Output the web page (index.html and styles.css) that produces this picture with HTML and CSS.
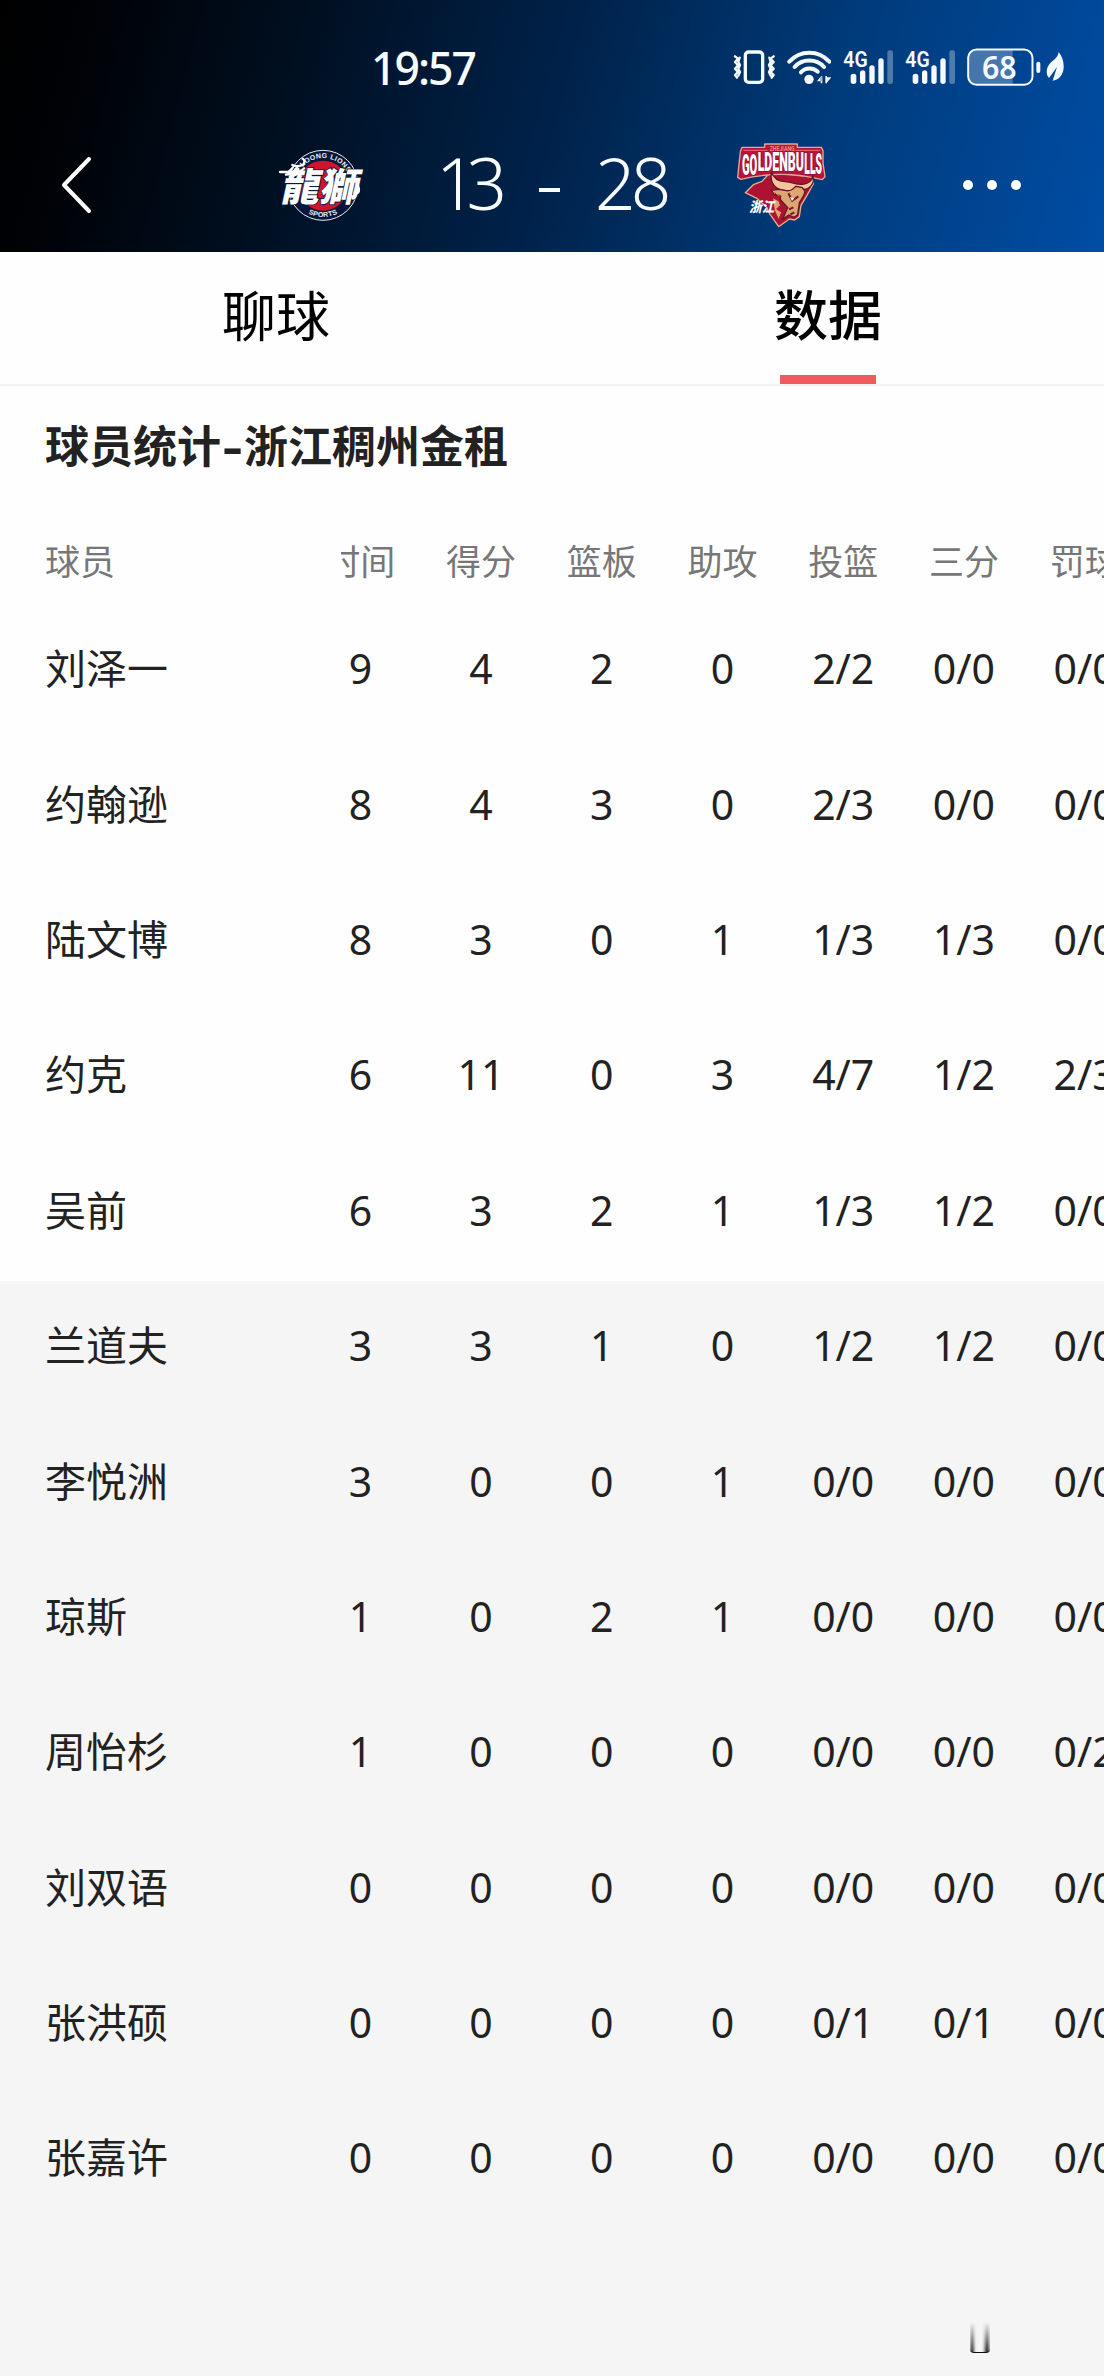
FILE: index.html
```html
<!DOCTYPE html>
<html lang="zh-CN">
<head>
  <meta charset="UTF-8">
  <title>球员统计</title>
  <link rel="stylesheet" href="styles.css">
</head>
<body>
  <header class="header">
    <!-- 状态栏 -->
    <div class="status-bar">
      <div class="clock">19:57</div>
      <div class="status-icons">
        <svg width="42.67" height="38.33" viewBox="38 55 128 115" fill="none" stroke="#f4faff" stroke-linecap="round" stroke-linejoin="round">
          <rect x="75" y="67" width="52" height="91" rx="10" stroke-width="10"/>
          <path d="M44 80l9 7-9 10 9 10-9 10 9 10-9 9 6 8M58 84l-4 12 5 10-5 11 5 10-5 11M160 80l-9 7 9 10-9 10 9 10-9 10 9 9-6 8M147 84l4 12-5 10 5 11-5 10 5 11" stroke-width="7"/>
        </svg>
        <svg width="44.67" height="38.33" viewBox="200 55 134 115" fill="none" stroke="#f4faff" stroke-width="12" stroke-linecap="round">
          <path d="M207 96C239 60 295 60 327 96M223 112C245 86 289 86 311 112M242 128C254 113 280 113 292 126"/>
          <circle cx="266" cy="149" r="14" fill="#f4faff" stroke="none"/>
          <path d="M301 139v22h5v-22zM290 155l13-17v17zM315 139v22h5v-22zM318 161l15-18h-15z" fill="#f4faff" stroke="none"/>
        </svg>
        <svg class="signal" width="50.67" height="38.33" viewBox="368 55 152 115">
          <text x="369" y="111" textLength="73" lengthAdjust="spacingAndGlyphs">4G</text>
          <g fill="#f4faff">
            <rect x="391" y="132" width="17" height="31" rx="8"/>
            <rect x="419" y="122" width="16" height="41" rx="8"/>
            <rect x="447" y="107" width="16" height="56" rx="8"/>
            <rect x="474" y="86" width="16" height="77" rx="8"/>
            <rect x="501" y="62" width="17" height="101" rx="7" opacity=".32"/>
          </g>
        </svg>
        <svg class="signal" width="50.67" height="38.33" viewBox="368 55 152 115">
          <text x="369" y="111" textLength="73" lengthAdjust="spacingAndGlyphs">4G</text>
          <g fill="#f4faff">
            <rect x="391" y="132" width="17" height="31" rx="8"/>
            <rect x="419" y="122" width="16" height="41" rx="8"/>
            <rect x="447" y="107" width="16" height="56" rx="8"/>
            <rect x="474" y="86" width="16" height="77" rx="8"/>
            <rect x="501" y="62" width="17" height="101" rx="7" opacity=".32"/>
          </g>
        </svg>
        <svg class="battery" width="74" height="38.33" viewBox="740 55 222 115">
          <path d="M768 60H877V165H768Q744 165 744 140V85Q744 60 768 60Z" fill="#fff" opacity=".27"/>
          <rect x="743.5" y="59.500" width="193" height="106" rx="25" fill="none" stroke="#f4faff" stroke-width="6"/>
          <rect x="948" y="96" width="12" height="34" rx="6" fill="#f4faff"/>
          <text x="785" y="148" textLength="104" lengthAdjust="spacingAndGlyphs">68</text>
        </svg>
        <svg class="leaf" width="18" height="38.33" viewBox="978 55 54 115">
          <path d="M1016 67C1027 81 1032 97 1031 115C1029 137 1015 152 998 153L1011 112L987 145C976 134 978 112 993 98C1003 89 1014 83 1016 67Z" fill="#f4faff"/>
        </svg>
      </div>
    </div>

    <!-- 比分 -->
    <div class="match-bar">
      <svg class="back" width="32" height="62" viewBox="0 0 32 62" fill="none" stroke="#fff" stroke-width="4" stroke-linecap="round" stroke-linejoin="round">
        <path d="M29 5L4 31L29 57"/>
      </svg>
      <svg class="logo lions" width="130" height="110" viewBox="0 0 390 330">
        <circle cx="189" cy="166" r="105" fill="#07163a" stroke="#e8eef5" stroke-width="3"/>
        <circle cx="189" cy="167" r="75" fill="#cf1430"/>
        <path id="arcTop" d="M107 166A82 82 0 0 1 271 166" fill="none"/>
        <path id="arcBottom" d="M94 166A95 95 0 0 0 284 166" fill="none"/>
        <text class="ring-text" text-anchor="middle"><textPath href="#arcTop" startOffset="54%">LOONG LIONS</textPath></text>
        <text class="ring-text" text-anchor="middle"><textPath href="#arcBottom" startOffset="50%">SPORTS</textPath></text>
        <g transform="translate(60 213) skewX(-12)">
          <text class="lions-name" x="0" y="0" textLength="232" lengthAdjust="spacingAndGlyphs">龍獅</text>
        </g>
        <path d="M60 126H86L98 113M78 134C96 134 104 122 113 109M97 105Q110 112 128 105Q139 94 128 86M90 141C108 137 120 124 132 115" fill="none" stroke="#fff" stroke-width="7" stroke-linecap="round"/>
        <path d="M297 165Q307 190 287 196Q274 188 287 178Z" fill="#fff"/>
      </svg>
      <div class="score"><span class="home">13</span><i class="dash"></i><span>28</span></div>
      <svg class="logo bulls" width="130" height="110" viewBox="0 0 390 330">
        <path d="M76 188L100 164L126 154L150 128L252 138L276 134L280 162L261 196L243 226L238 260L224 270L208 267L176 290L148 250L140 232L112 206Z" fill="#ae1233" stroke="#dfb190" stroke-width="4" stroke-linejoin="round"/>
        <path d="M66 52H134V42H232V52H304L309 62V100L315 140L306 149Q185 118 63 148L53 142L61 65Z" fill="#b81437" stroke="#e2a69a" stroke-width="4" stroke-linejoin="round"/>
        <path d="M70 61H142M226 61H300" stroke="#ef6a72" stroke-width="3"/>
        <text class="bulls-top" x="149" y="62" textLength="75" lengthAdjust="spacingAndGlyphs">ZHEJIANG</text>
        <g class="bulls-name">
          <text x="66" y="134" textLength="46" lengthAdjust="spacingAndGlyphs" font-size="90">GO</text>
          <text x="113" y="123" textLength="139" lengthAdjust="spacingAndGlyphs" font-size="76">LDENBU</text>
          <text x="253" y="132" textLength="53" lengthAdjust="spacingAndGlyphs" font-size="88">LLS</text>
        </g>
        <!-- 牛头 -->
        <path d="M154 126C149 161 165 178 196 182C222 181 240 191 251 178C270 178 286 157 278 138C275 157 262 162 247 163C224 164 219 156 195 155C174 154 160 143 154 126Z" fill="#f4c59a" stroke="#681529" stroke-width="4"/>
        <path d="M154 181L177 178L199 182Q214 184 227 169L247 173L255 184L251 197L238 218L233 254L222 262L206 255L188 268L203 233L182 210L180 197L162 193Z" fill="#dba66f" stroke="#681529" stroke-width="4"/>
        <path d="M205 190L214 207L225 208M214 214L235 199M207 238L220 232M211 253L223 247" fill="none" stroke="#76152c" stroke-width="6"/>
        <path d="M210 201L223 205L216 213Z" fill="#fff"/>
        <path d="M164 188L173 197L185 200M160 204L177 213L181 226L170 237L185 247L176 269L163 241L160 222" fill="#dba66f" stroke="#b81437" stroke-width="3"/>
        <text class="bulls-city" x="88" y="247" textLength="74" lengthAdjust="spacingAndGlyphs">浙江</text>
      </svg>
      <div class="more"><i></i><i></i><i></i></div>
    </div>
  </header>

  <nav class="tabs">
    <div class="tab">聊球</div>
    <div class="tab active">数据</div>
  </nav>

  <main class="stats">
    <h2 class="stats-title">球员统计<span class="hyphen">-</span>浙江稠州金租</h2>

    <div class="row head">
      <div class="name">球员</div>
      <div class="scroll"><div class="cells"><span>时间</span><span>得分</span><span>篮板</span><span>助攻</span><span>投篮</span><span>三分</span><span>罚球</span></div></div>
    </div>

    <!-- 首发 -->
    <div class="row">
      <div class="name">刘泽一</div>
      <div class="scroll"><div class="cells"><span>9</span><span>4</span><span>2</span><span>0</span><span>2/2</span><span>0/0</span><span>0/0</span></div></div>
    </div>
    <div class="row">
      <div class="name">约翰逊</div>
      <div class="scroll"><div class="cells"><span>8</span><span>4</span><span>3</span><span>0</span><span>2/3</span><span>0/0</span><span>0/0</span></div></div>
    </div>
    <div class="row">
      <div class="name">陆文博</div>
      <div class="scroll"><div class="cells"><span>8</span><span>3</span><span>0</span><span>1</span><span>1/3</span><span>1/3</span><span>0/0</span></div></div>
    </div>
    <div class="row">
      <div class="name">约克</div>
      <div class="scroll"><div class="cells"><span>6</span><span>11</span><span>0</span><span>3</span><span>4/7</span><span>1/2</span><span>2/3</span></div></div>
    </div>
    <div class="row">
      <div class="name">吴前</div>
      <div class="scroll"><div class="cells"><span>6</span><span>3</span><span>2</span><span>1</span><span>1/3</span><span>1/2</span><span>0/0</span></div></div>
    </div>

    <!-- 替补 -->
    <div class="bench">
      <div class="row">
        <div class="name">兰道夫</div>
        <div class="scroll"><div class="cells"><span>3</span><span>3</span><span>1</span><span>0</span><span>1/2</span><span>1/2</span><span>0/0</span></div></div>
      </div>
      <div class="row">
        <div class="name">李悦洲</div>
        <div class="scroll"><div class="cells"><span>3</span><span>0</span><span>0</span><span>1</span><span>0/0</span><span>0/0</span><span>0/0</span></div></div>
      </div>
      <div class="row">
        <div class="name">琼斯</div>
        <div class="scroll"><div class="cells"><span>1</span><span>0</span><span>2</span><span>1</span><span>0/0</span><span>0/0</span><span>0/0</span></div></div>
      </div>
      <div class="row">
        <div class="name">周怡杉</div>
        <div class="scroll"><div class="cells"><span>1</span><span>0</span><span>0</span><span>0</span><span>0/0</span><span>0/0</span><span>0/2</span></div></div>
      </div>
      <div class="row">
        <div class="name">刘双语</div>
        <div class="scroll"><div class="cells"><span>0</span><span>0</span><span>0</span><span>0</span><span>0/0</span><span>0/0</span><span>0/0</span></div></div>
      </div>
      <div class="row">
        <div class="name">张洪硕</div>
        <div class="scroll"><div class="cells"><span>0</span><span>0</span><span>0</span><span>0</span><span>0/1</span><span>0/1</span><span>0/0</span></div></div>
      </div>
      <div class="row">
        <div class="name">张嘉许</div>
        <div class="scroll"><div class="cells"><span>0</span><span>0</span><span>0</span><span>0</span><span>0/0</span><span>0/0</span><span>0/0</span></div></div>
      </div>
    </div>
  </main>
  <div class="mark"></div>
</body>
</html>
```

FILE: styles.css
```css
* {
  box-sizing: border-box;
}
body {
  margin: 0;
  width: 1104px;
  height: 2376px;
  display: flex;
  flex-direction: column;
  position: relative;
  overflow: hidden;
  background: #fefefe;
  color: #222;
  font-family: "Noto Sans", "Noto Sans CJK SC", sans-serif;
}

/* 顶部 */
.header {
  height: 252px;
  flex: none;
  background: linear-gradient(105deg, #000 0%, #000206 8%, #000e1e 25%, #00224a 50%, #003b7b 74%, #004da4 100%);
  color: #f8fcff;
}
.status-bar {
  height: 130px;
  padding: 48px 40px 0 371px;
  display: flex;
  justify-content: space-between;
  align-items: flex-start;
}
.clock {
  font-size: 44.5px;
  font-weight: 500;
  line-height: 39px;
  letter-spacing: -2px;
}
.status-icons {
  display: flex;
  gap: 11.33px;
}
.status-icons svg { display: block; }
.leaf { margin-left: -6px; }
.signal text {
  font-family: "Roboto", sans-serif;
  font-size: 64px;
  font-weight: 600;
  fill: #f4faff;
}
.battery text {
  font-family: "Noto Sans", sans-serif;
  font-size: 97px;
  font-weight: 600;
  fill: #f4faff;
}
.match-bar {
  height: 110px;
  display: flex;
  align-items: center;
}
.back {
  margin-left: 60px;
  margin-right: 168px;
}
.logo { flex: none; }
.score {
  width: 330px;
  padding-left: 46px;
  display: flex;
  align-items: center;
  font-size: 71px;
  font-weight: 350;
  line-height: 108px;
  letter-spacing: -5px;
  padding-bottom: 4px;
}
.home { letter-spacing: -10px; }
.dash {
  width: 21px;
  height: 4px;
  margin: 14px 35px 0 42px;
  background: #f8fcff;
}
.more {
  display: flex;
  gap: 14px;
  margin-left: 113px;
}
.more i {
  width: 10px;
  height: 10px;
  border-radius: 50%;
  background: #fff;
}

/* 队标 */
.ring-text {
  font-family: "Liberation Sans", sans-serif;
  font-size: 21px;
  font-weight: bold;
  letter-spacing: 1px;
  fill: #eef3fa;
}
.lions-name {
  font-family: "Noto Sans CJK TC", sans-serif;
  font-size: 116px;
  font-weight: 900;
  fill: #fff;
  stroke: #07163a;
  stroke-width: 5px;
  paint-order: stroke;
}
.bulls-top {
  font-family: "Roboto", sans-serif;
  font-size: 19px;
  font-weight: bold;
  fill: #f3868a;
}
.bulls-name {
  font-family: "Roboto", sans-serif;
  font-weight: 900;
  fill: #fff;
  stroke: #8c1233;
  stroke-width: 4px;
  paint-order: stroke;
}
.bulls-city {
  font-family: "Noto Sans CJK SC", sans-serif;
  font-size: 42px;
  font-weight: 900;
  font-style: italic;
  fill: #fff;
}

/* 标签 */
.tabs {
  height: 134px;
  flex: none;
  display: flex;
  border-bottom: 2px solid #f3f3f3;
  color: #000;
}
.tab {
  flex: 1;
  display: flex;
  flex-direction: column;
  align-items: center;
  justify-content: space-between;
  font-size: 54px;
  line-height: 122px;
  padding-top: 3px;
}
.tab.active {
  font-weight: 500;
  line-height: 119px;
  padding-top: 4px;
}
.tab.active::after {
  content: "";
  width: 96px;
  height: 9px;
  background: #f05b5e;
}

/* 数据表 */
.stats {
  flex: 1;
  display: flex;
  flex-direction: column;
}
.stats-title {
  height: 134px;
  margin: 0;
  padding-left: 45px;
  font-size: 44px;
  font-weight: 700;
  line-height: 120px;
}
.hyphen {
  display: inline-block;
  width: 23px;
  text-align: center;
  transform: scaleX(1.4);
}
.row {
  height: 135.4px;
  display: flex;
  align-items: center;
  flex: none;
  font-size: 41px;
  line-height: 128px;
  padding-bottom: 7px;
}
.row.head {
  height: 84px;
  font-size: 35px;
  line-height: 82px;
  padding-bottom: 0;
  color: #777;
}
.name {
  width: 341px;
  padding-left: 45px;
  flex: none;
}
.scroll {
  flex: 1;
  min-width: 0;
  overflow: hidden;
}
/* 表格已向左滚动一点 */
.cells {
  width: 845px;
  margin-left: -41px;
  display: grid;
  grid-template-columns: repeat(7, 1fr);
  text-align: center;
}
.bench {
  flex: 1;
  background: #f5f5f5;
}

.mark {
  position: absolute;
  left: 970px;
  top: 2322px;
  width: 20px;
  height: 31px;
  border-bottom: 1.500px solid #111;
  border-radius: 0 0 4px 4px;
  background:
    linear-gradient(to bottom, #f5f5f5, rgba(245,245,245,0)),
    linear-gradient(to right, #aaa 0, #333 2px, #eee 6px, #fafafa 11px, #ddd 13px, #222 17px, #aaa 20px);
}
```
